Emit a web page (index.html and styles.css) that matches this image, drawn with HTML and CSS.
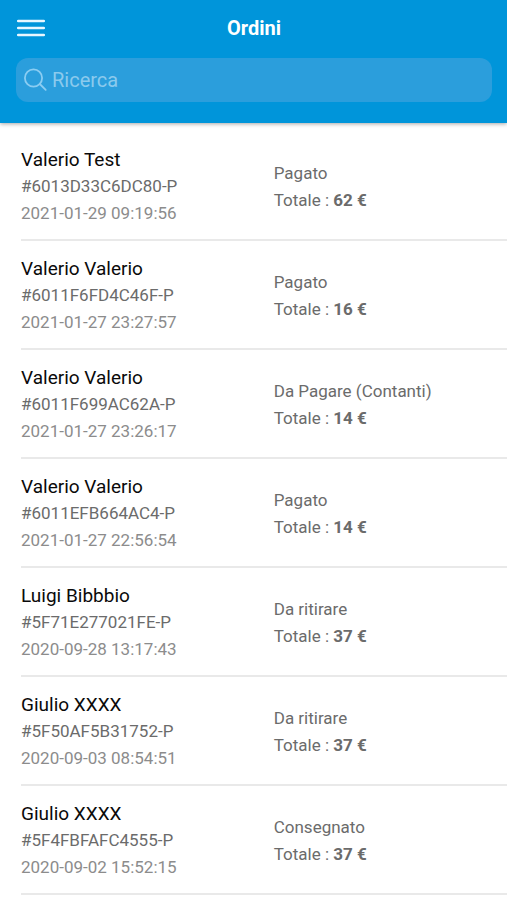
FILE: index.html
```html
<!DOCTYPE html>
<html lang="it">
<head>
<meta charset="utf-8">
<meta name="viewport" content="width=device-width, initial-scale=1">
<title>Ordini</title>
<link rel="stylesheet" href="styles.css">
</head>
<body>
<header class="header">
  <div class="toolbar">
    <button class="menu" type="button" aria-label="Menu">
      <svg viewBox="0 0 28 18" width="28" height="18" aria-hidden="true"><path d="M1.2 2h25.6M1.2 9h25.6M1.2 16h25.6" stroke="#e8f7ff" stroke-width="2.5" stroke-linecap="round"/></svg>
    </button>
    <h1 class="title">Ordini</h1>
  </div>
  <label class="search">
    <svg viewBox="0 0 24 24" width="24" height="24" fill="none" stroke="currentColor" stroke-width="1.8" stroke-linecap="round" aria-hidden="true"><circle cx="9.5" cy="10" r="8.6"/><path d="M15.8 16l5.9 5.9"/></svg>
    <input class="search-input" type="search" placeholder="Ricerca" aria-label="Ricerca">
  </label>
</header>
<main>
  <ul class="orders">
    <li class="order"><div class="customer"><h2 class="name">Valerio Test</h2><p class="code">#6013D33C6DC80-P</p><time class="date">2021-01-29 09:19:56</time></div><div class="status"><p>Pagato</p><p>Totale : <strong>62 €</strong></p></div></li>
    <li class="order"><div class="customer"><h2 class="name">Valerio Valerio</h2><p class="code">#6011F6FD4C46F-P</p><time class="date">2021-01-27 23:27:57</time></div><div class="status"><p>Pagato</p><p>Totale : <strong>16 €</strong></p></div></li>
    <li class="order"><div class="customer"><h2 class="name">Valerio Valerio</h2><p class="code">#6011F699AC62A-P</p><time class="date">2021-01-27 23:26:17</time></div><div class="status"><p>Da Pagare (Contanti)</p><p>Totale : <strong>14 €</strong></p></div></li>
    <li class="order"><div class="customer"><h2 class="name">Valerio Valerio</h2><p class="code">#6011EFB664AC4-P</p><time class="date">2021-01-27 22:56:54</time></div><div class="status"><p>Pagato</p><p>Totale : <strong>14 €</strong></p></div></li>
    <li class="order"><div class="customer"><h2 class="name">Luigi Bibbbio</h2><p class="code">#5F71E277021FE-P</p><time class="date">2020-09-28 13:17:43</time></div><div class="status"><p>Da ritirare</p><p>Totale : <strong>37 €</strong></p></div></li>
    <li class="order"><div class="customer"><h2 class="name">Giulio XXXX</h2><p class="code">#5F50AF5B31752-P</p><time class="date">2020-09-03 08:54:51</time></div><div class="status"><p>Da ritirare</p><p>Totale : <strong>37 €</strong></p></div></li>
    <li class="order"><div class="customer"><h2 class="name">Giulio XXXX</h2><p class="code">#5F4FBFAFC4555-P</p><time class="date">2020-09-02 15:52:15</time></div><div class="status"><p>Consegnato</p><p>Totale : <strong>37 €</strong></p></div></li>
  </ul>
</main>
</body>
</html>
```
FILE: styles.css
```css
* { box-sizing: border-box; }
body, h1, h2, p, ul { margin: 0; padding: 0; }
body {
  background: #fff;
  color: #6b6b6b;
  font: 17px/27px Roboto, sans-serif;
}
.header {
  padding: 0 15px 21px 16px;
  background: #0095da;
  box-shadow: 0 1px 4px rgba(0, 0, 0, 0.35);
}
.toolbar {
  display: grid;
  grid-template-columns: 30px 1fr 30px;
  align-items: center;
  height: 58px;
  padding-bottom: 2px;
}
.menu {
  display: flex;
  padding: 0 1px;
  border: 0;
  background: none;
}
.title {
  color: #fff;
  font-size: 20px;
  font-weight: 700;
  text-align: center;
}
.search {
  display: flex;
  align-items: center;
  gap: 4px;
  height: 44px;
  padding: 0 8px;
  border-radius: 12px;
  background: #2b9edc;
  color: #8bcdf2;
}
.search-input {
  flex: 1;
  min-width: 0;
  padding: 0;
  border: 0;
  outline: 0;
  background: none;
  color: #fff;
  font: 20px/28px Roboto, sans-serif;
}
.search-input::placeholder { color: #8bcaed; opacity: 1; }
.orders { padding: 9px 0 0 21px; list-style: none; }
.order {
  display: grid;
  grid-template-columns: 52% 1fr;
  align-items: center;
  padding: 14px 0 12px;
  border-bottom: 2px solid #e9e9e9;
}
.name { color: #0a0a0a; font-size: 19px; font-weight: 400; }
.date { display: block; color: #8c8c8c; }
```
